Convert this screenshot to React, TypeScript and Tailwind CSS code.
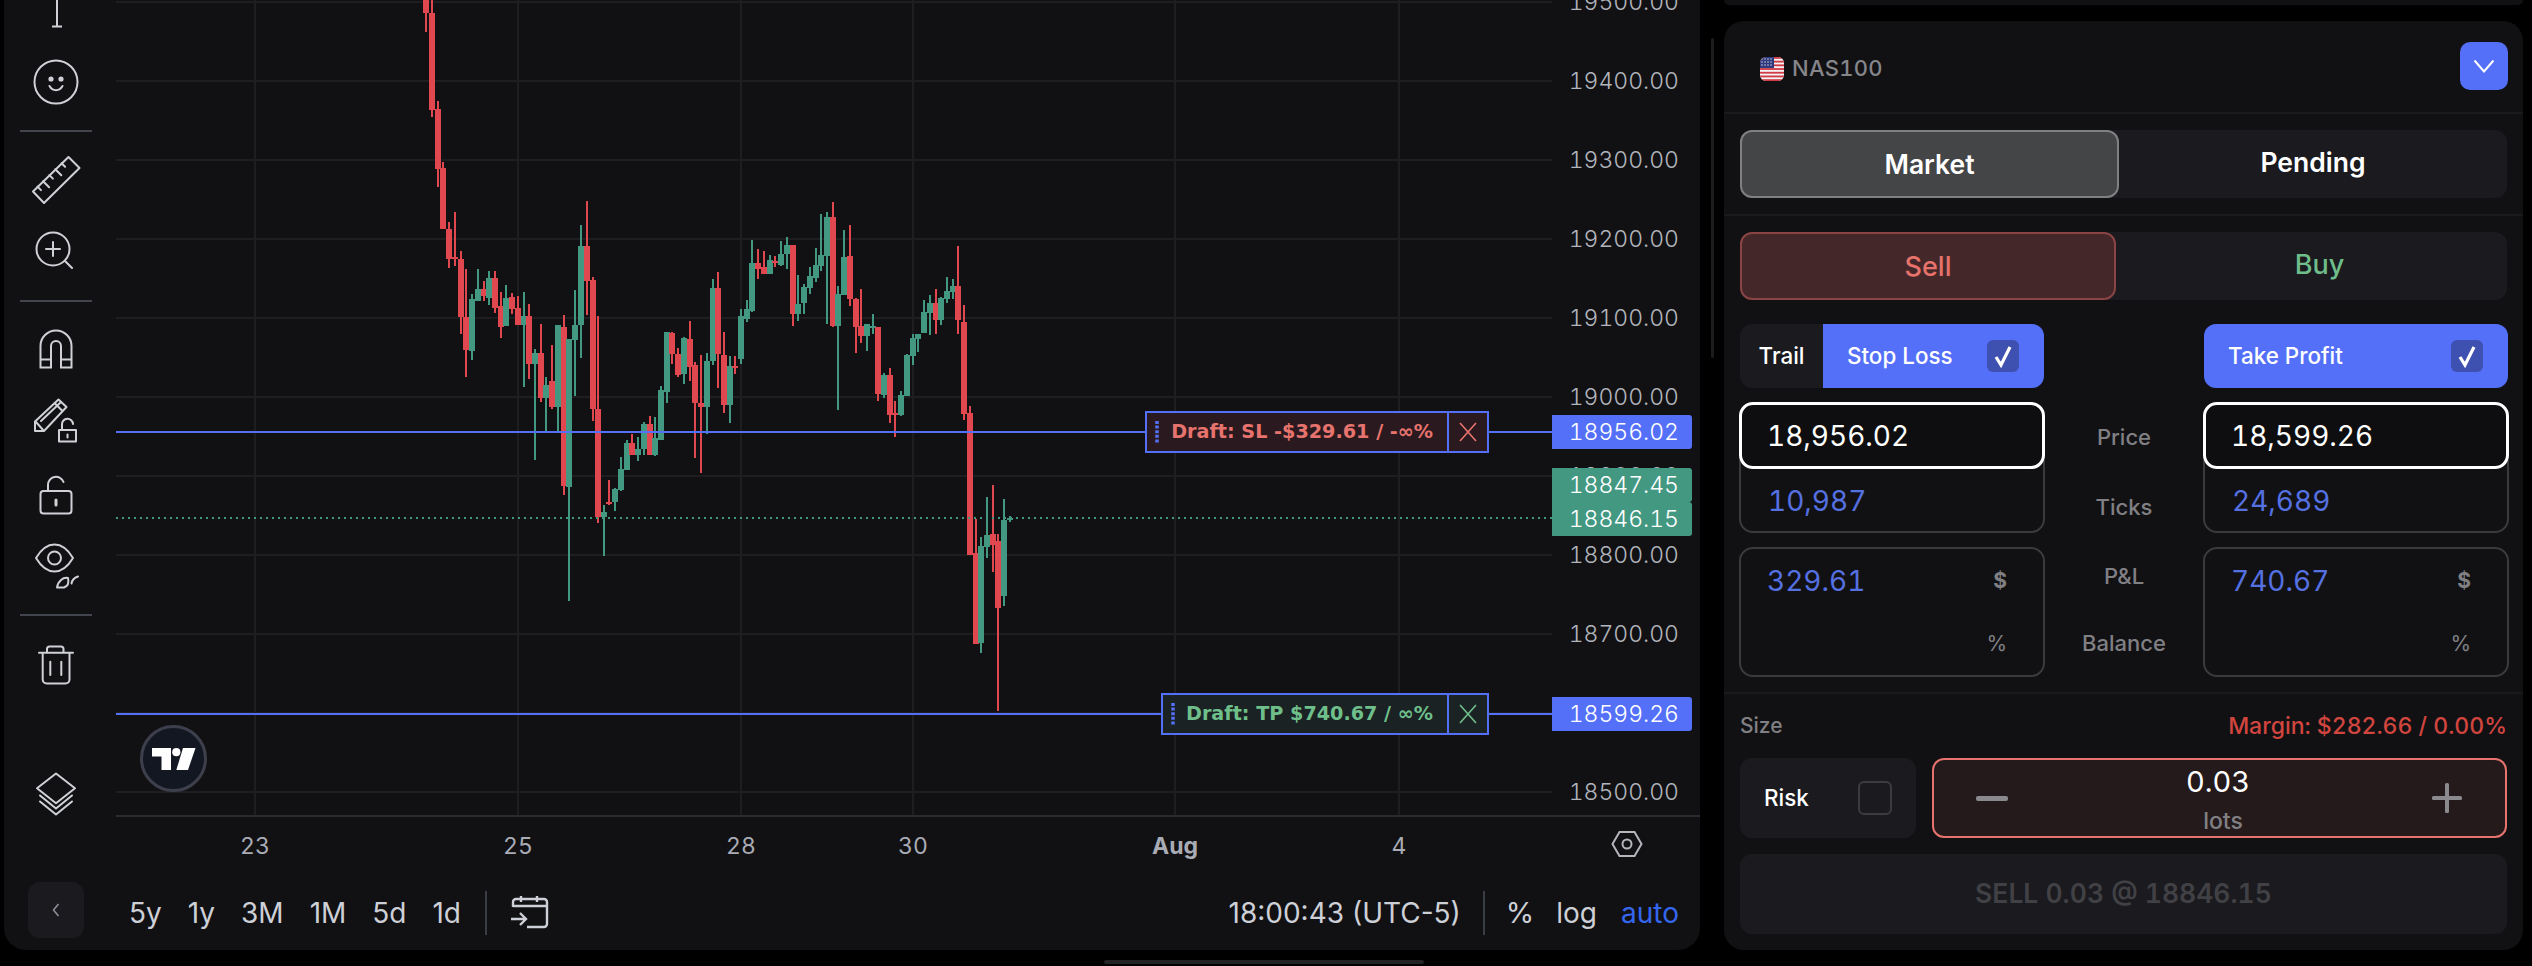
import React from 'react';

type Candle = [number, number, number, number, number, 'r' | 'g'];

// x, wick top, wick bottom, body top, body bottom
const candles: Candle[] = [
  [66, -20, 70, -20, 29, 'r'], [81, -20, 254, 28, 239, 'r'], [96, 219, 407, 237, 367, 'r'], [109, 353, 498, 366, 498, 'r'],
  [124, 484, 584, 499, 563, 'r'], [139, 462, 579, 560, 564, 'r'], [154, 547, 727, 563, 690, 'r'], [167, 586, 821, 690, 762, 'r'],
  [182, 639, 784, 651, 764, 'g'], [197, 586, 656, 629, 656, 'g'], [212, 612, 656, 629, 645, 'r'], [226, 590, 664, 605, 649, 'g'],
  [240, 590, 682, 605, 670, 'r'], [255, 636, 736, 666, 711, 'r'], [269, 621, 710, 649, 710, 'g'], [283, 638, 684, 647, 673, 'r'],
  [298, 645, 708, 671, 708, 'r'], [313, 636, 843, 688, 708, 'g'], [327, 662, 825, 688, 791, 'r'], [341, 760, 1002, 769, 793, 'g'],
  [356, 706, 875, 769, 867, 'r'], [370, 820, 940, 837, 865, 'g'], [384, 751, 891, 828, 886, 'r'], [399, 707, 940, 707, 886, 'g'],
  [414, 686, 1078, 712, 1058, 'r'], [428, 738, 1307, 738, 1060, 'g'], [442, 632, 862, 707, 740, 'g'], [457, 490, 780, 536, 708, 'g'],
  [472, 438, 686, 536, 612, 'r'], [487, 603, 917, 610, 889, 'r'], [500, 688, 1139, 889, 1126, 'r'], [515, 1098, 1209, 1115, 1124, 'g'],
  [529, 1045, 1098, 1092, 1096, 'r'], [543, 1061, 1111, 1063, 1093, 'g'], [558, 995, 1069, 1021, 1067, 'g'], [574, 958, 1023, 964, 1023, 'g'],
  [587, 945, 990, 963, 990, 'r'], [601, 950, 1004, 978, 989, 'g'], [617, 919, 991, 923, 978, 'g'], [631, 905, 991, 923, 991, 'r'],
  [645, 908, 993, 953, 991, 'g'], [660, 841, 957, 849, 957, 'g'], [675, 723, 878, 723, 852, 'g'], [689, 723, 793, 725, 771, 'r'],
  [703, 758, 821, 771, 816, 'r'], [718, 734, 836, 736, 814, 'g'], [733, 699, 828, 738, 798, 'r'], [747, 788, 997, 795, 878, 'r'],
  [761, 772, 1030, 876, 886, 'r'], [776, 769, 944, 786, 886, 'g'], [791, 608, 795, 627, 786, 'g'], [805, 592, 845, 627, 771, 'r'],
  [820, 723, 899, 773, 882, 'r'], [834, 775, 921, 797, 882, 'g'], [848, 775, 814, 797, 800, 'r'], [862, 673, 791, 688, 782, 'g'],
  [877, 653, 701, 673, 694, 'g'], [891, 523, 679, 573, 676, 'g'], [905, 542, 608, 573, 585, 'r'], [920, 547, 597, 582, 597, 'r'],
  [935, 554, 597, 566, 597, 'g'], [949, 556, 582, 567, 571, 'r'], [963, 525, 578, 553, 576, 'g'], [978, 516, 586, 534, 553, 'g'],
  [993, 534, 710, 534, 683, 'r'], [1007, 599, 699, 662, 683, 'g'], [1021, 618, 684, 625, 660, 'g'], [1036, 582, 640, 601, 627, 'g'],
  [1051, 539, 614, 577, 605, 'g'], [1065, 466, 590, 555, 579, 'g'], [1079, 461, 706, 473, 558, 'g'], [1095, 440, 712, 473, 710, 'r'],
  [1108, 623, 893, 640, 710, 'g'], [1122, 501, 642, 560, 642, 'g'], [1138, 490, 666, 558, 651, 'r'], [1152, 649, 769, 651, 712, 'r'],
  [1165, 629, 747, 710, 732, 'r'], [1181, 706, 764, 706, 732, 'g'], [1196, 684, 727, 709, 712, 'g'], [1210, 712, 873, 712, 858, 'r'],
  [1224, 812, 866, 817, 860, 'g'], [1239, 801, 921, 817, 902, 'r'], [1252, 873, 951, 898, 902, 'r'], [1267, 850, 906, 860, 904, 'g'],
  [1282, 771, 862, 773, 862, 'g'], [1297, 727, 795, 736, 775, 'g'], [1311, 727, 767, 727, 738, 'g'], [1325, 653, 725, 679, 725, 'g'],
  [1340, 642, 729, 660, 681, 'g'], [1355, 629, 727, 660, 697, 'r'], [1369, 647, 708, 649, 697, 'g'], [1384, 603, 660, 634, 651, 'g'],
  [1398, 608, 651, 623, 636, 'g'], [1412, 536, 727, 623, 697, 'r'], [1426, 664, 915, 701, 901, 'r'], [1441, 884, 1208, 899, 1208, 'r'],
  [1456, 1130, 1402, 1204, 1402, 'r'], [1470, 1169, 1422, 1189, 1400, 'g'], [1484, 1082, 1215, 1165, 1191, 'g'], [1499, 1056, 1245, 1163, 1185, 'r'],
  [1513, 1163, 1548, 1178, 1322, 'r'], [1527, 1085, 1318, 1132, 1296, 'g'], [1542, 1122, 1135, 1128, 1131, 'g'],
];

const sx = (x: number) => 400 + x / 2.529;
const sy = (y: number) => y / 2.176;

const gridY = [2, 81, 160, 239, 318, 397, 476, 555, 634, 713, 792];
const gridX = [255, 518, 741, 913, 1175, 1399];
const ticks = ['19500.00', '19400.00', '19300.00', '19200.00', '19100.00', '19000.00', '18900.00', '18800.00', '18700.00', '18600.00', '18500.00'];
const ranges = ['5y', '1y', '3M', '1M', '5d', '1d'];

const Icon: React.FC<{ y: number; h: number; className?: string; children: React.ReactNode }> = ({ y, h, className, children }) => (
  <svg
    className={className}
    width={56}
    height={h}
    viewBox={`28 ${y} 56 ${h}`}
    fill="none"
    stroke="#cfd1d6"
    strokeWidth={2}
    strokeLinecap="round"
    strokeLinejoin="round"
  >
    {children}
  </svg>
);

const Toolbar = () => (
  <div className="flex flex-col items-center w-[112px] pr-[8px] shrink-0">
    <Icon y={0} h={30}>
      <path d="M57 -2V26.5M52 26.5H62" strokeLinecap="butt" />
    </Icon>
    <Icon y={58} h={48} className="mt-[28px]">
      <circle cx={56} cy={82} r={21.5} />
      <circle cx={51} cy={79} r={1.6} fill="#cfd1d6" />
      <circle cx={61} cy={79} r={1.6} fill="#cfd1d6" />
      <path d="M49.5 86c3 5.5 10 5.5 13 0" />
    </Icon>
    <div className="w-[72px] h-[2px] mt-[24px] bg-[#42454d]" />
    <Icon y={154} h={52} className="mt-[22px]">
      <path d="M33 191.5L68.5 157L79.5 168L44 203Z" />
      <path d="M37.5 186.6l3.5 3.5M43.1 181.2l6 6M49.4 175.1l3.5 3.5M55.3 169.3l6 6M61.6 163.2l3.5 3.5" />
    </Icon>
    <Icon y={230} h={42} className="mt-[24px]">
      <circle cx={53} cy={249} r={16.5} />
      <path d="M53 242v14M46 249h14M65 261l7 7" />
    </Icon>
    <div className="w-[72px] h-[2px] mt-[28px] bg-[#42454d]" />
    <Icon y={328} h={42} className="mt-[26px]">
      <path d="M40.5 367.5V346a15.5 15.5 0 0 1 31 0V367.5H61V346a5 5 0 0 0-10 0V367.5ZM40.5 359.5H51M61 359.5H71.5" strokeLinejoin="miter" />
    </Icon>
    <Icon y={397} h={47} className="mt-[27px]">
      <path d="M35 431V421.5L58.5 399.5L66.5 407L44 431ZM35.5 421.5L44 431M41 421L60.5 402.5M54.5 403L62.5 411" />
      <path d="M59 430H76V441.5H59ZM62 430V424.5a5.5 5.5 0 0 1 11-0.5M67.5 434.5v3" />
    </Icon>
    <Icon y={474} h={42} className="mt-[30px]">
      <path d="M43.5 491H68.5a3 3 0 0 1 3 3V510.5a3 3 0 0 1-3 3H43.5a3 3 0 0 1-3-3V494a3 3 0 0 1 3-3ZM48 491V485a8 8 0 0 1 15.5-3" />
      <path d="M56 500v5" strokeWidth={3} />
    </Icon>
    <Icon y={542} h={48} className="mt-[26px]">
      <path d="M36 558C42 548 48 544.5 54.5 544.5C61 544.5 67 548 73 558C67 568 61 571.5 54.5 571.5C48 571.5 42 568 36 558Z" />
      <circle cx={54.5} cy={558} r={6.5} />
      <path d="M57 587.5C58 581 63 577 68 578C69 582 68 586 64 587.5ZM78 576.5C75 577.5 72 580 71.5 583.5" />
    </Icon>
    <div className="w-[72px] h-[2px] mt-[24px] bg-[#42454d]" />
    <Icon y={644} h={42} className="mt-[28px]">
      <path d="M39 652.7H73M47 652.7V649a2.5 2.5 0 0 1 2.5-2.5H61a2.5 2.5 0 0 1 2.5 2.5V652.7M42.7 652.7V679.5a4 4 0 0 0 4 4H65.5a4 4 0 0 0 4-4V652.7M50.3 661.7V675M61.3 661.7V675" />
    </Icon>
    <Icon y={771} h={46} className="mt-[85px]">
      <path d="M56 773.5L75 788.3L56 803.3L37 788.3ZM40 795.5L56 808.5L72 795.5M40 801.5L56 814.5L72 801.5" />
    </Icon>
    <button className="flex items-center justify-center w-[56px] h-[56px] mt-[65px] rounded-[12px] bg-[#1a1a1f]">
      <svg width="8" height="14" viewBox="0 0 8 14" fill="none" stroke="#8b8e96" strokeWidth="1.6">
        <path d="M6.5 1L1.5 7L6.5 13" />
      </svg>
    </button>
  </div>
);

const Tag: React.FC<{ className: string; bg: string; tone: string; stroke: string; label: string }> = ({
  className,
  bg,
  tone,
  stroke,
  label,
}) => (
  <div className={`absolute flex h-[42px] border-2 border-[#5570f8] ${className} ${bg}`}>
    <svg className="absolute left-[8px] top-[8px]" width="4" height="22" viewBox="0 0 4 22">
      <line x1="2" x2="2" y1="0" y2="22" stroke="#5570f8" strokeWidth="3.5" strokeDasharray="3 1.6" />
    </svg>
    <div className={`flex-1 flex items-center justify-end pr-[14px] text-[19.2px] font-bold whitespace-nowrap [font-family:'DejaVu_Sans',sans-serif] ${tone}`}>
      {label}
    </div>
    <div className="flex items-center justify-center w-[40px] border-l-2 border-[#5570f8]">
      <svg width="20" height="20" viewBox="0 0 20 20" fill="none" stroke={stroke} strokeWidth="1.6">
        <path d="M2 1L18 19M18 1L2 19" />
      </svg>
    </div>
  </div>
);

const ChartPane = () => (
  <div className="relative w-[1436px] h-full overflow-hidden">
    <svg width={1436} height={815} viewBox="116 0 1436 815" shapeRendering="crispEdges">
      {gridY.map((y) => (
        <rect key={y} x={116} y={y - 1} width={1436} height={2} fill="#1e1e21" />
      ))}
      {gridX.map((x) => (
        <rect key={x} x={x - 1} y={0} width={2} height={815} fill="#1e1e21" />
      ))}
      {candles.map(([x, wt, wb, bt, bb, c], i) => {
        const cx = Math.round(sx(x));
        const fill = c === 'r' ? '#e0474f' : '#439882';
        return (
          <g key={i} fill={fill}>
            <rect x={cx - 1} y={sy(wt)} width={2} height={sy(wb) - sy(wt)} />
            <rect x={cx - 3} y={sy(bt)} width={6} height={Math.max(sy(bb) - sy(bt), 2)} />
          </g>
        );
      })}
      <line x1={116} x2={1552} y1={518} y2={518} stroke="#439882" strokeWidth={2} strokeDasharray="2 4" />
      <rect x={116} y={431} width={1436} height={2} fill="#5570f8" />
      <rect x={116} y={713} width={1436} height={2} fill="#5570f8" />
    </svg>

    <Tag
      className="left-[1029px] top-[411px] w-[344px]"
      bg="bg-[#2a1a1f]"
      tone="text-[#e6736d]"
      stroke="#e6736d"
      label="Draft: SL -$329.61 / -∞%"
    />
    <Tag
      className="left-[1045px] top-[693px] w-[328px]"
      bg="bg-[#1a2224]"
      tone="text-[#6fbf8b]"
      stroke="#6fbf8b"
      label="Draft: TP $740.67 / ∞%"
    />

    <div className="absolute left-[24px] top-[725px] flex items-center justify-center w-[67px] h-[67px] rounded-full bg-[#131722] border-[3px] border-[#3d404c]">
      <svg width="44" height="22" viewBox="0 0 44 22" fill="#ffffff">
        <path d="M0 0H19V22H9.5V8.5H0Z" />
        <circle cx="24.3" cy="4.2" r="4.1" />
        <path d="M31 0H43.5L36 22H24.3Z" />
      </svg>
    </div>
  </div>
);

const PriceTag: React.FC<{ top: string; bg: string; children: React.ReactNode }> = ({ top, bg, children }) => (
  <div className={`absolute left-0 flex items-center justify-end w-[140px] h-[34px] pr-[13px] rounded-r-[3px] text-[23px] font-light text-white ${top} ${bg}`}>
    {children}
  </div>
);

const PriceAxis = () => (
  <div className="relative w-[148px] h-full overflow-hidden">
    <div className="flex flex-col -mt-[37px] text-[23px] font-light text-[#b2b5bc] pr-[21px]">
      {ticks.map((t) => (
        <div key={t} className="flex items-center justify-end h-[79px] shrink-0">
          {t}
        </div>
      ))}
    </div>
    <PriceTag top="top-[415px]" bg="bg-[#5570f8]">18956.02</PriceTag>
    <PriceTag top="top-[468px]" bg="bg-[#439882]">18847.45</PriceTag>
    <PriceTag top="top-[502px]" bg="bg-[#439882]">18846.15</PriceTag>
    <PriceTag top="top-[697px]" bg="bg-[#5570f8]">18599.26</PriceTag>
  </div>
);

const TimeAxis = () => (
  <div className="relative h-[65px] shrink-0 text-[23px] text-[#a9acb4]">
    <span className="absolute left-[139px] top-[12px] -translate-x-1/2">23</span>
    <span className="absolute left-[402px] top-[12px] -translate-x-1/2">25</span>
    <span className="absolute left-[625px] top-[12px] -translate-x-1/2">28</span>
    <span className="absolute left-[797px] top-[12px] -translate-x-1/2">30</span>
    <span className="absolute left-[1059px] top-[12px] -translate-x-1/2 font-bold">Aug</span>
    <span className="absolute left-[1283px] top-[12px] -translate-x-1/2">4</span>
    <svg className="absolute left-[1495px] top-[13px]" width="32" height="28" viewBox="0 0 32 28" fill="none" stroke="#b4b6bc" strokeWidth="2">
      <path d="M8.5 2H23.5L30.5 14L23.5 26H8.5L1.5 14Z" />
      <circle cx="16" cy="14" r="4.5" />
    </svg>
  </div>
);

const BottomBar = () => (
  <div className="flex items-center justify-between h-[68px] pb-[6px] pr-[21px] text-[28px] normal-nums text-[#cdd0d6]">
    <div className="flex items-center">
      <div className="flex gap-[26px] pl-[13px]">
        {ranges.map((r) => (
          <span key={r}>{r}</span>
        ))}
      </div>
      <div className="w-[2px] h-[44px] ml-[24px] bg-[#3a3d46]" />
      <svg className="ml-[22px]" width="40" height="36" viewBox="0 0 40 36" fill="none" stroke="#cdd0d6" strokeWidth="2.4">
        <path d="M4 12V7a3 3 0 0 1 3-3H35a3 3 0 0 1 3 3V29a3 3 0 0 1-3 3H18M4 11H38M12 1V7M28 1V7" />
        <path d="M2 24H17M11 18L17 24L11 30" />
      </svg>
    </div>
    <div className="flex items-center">
      <span>18:00:43 (UTC-5)</span>
      <div className="w-[2px] h-[44px] ml-[22px] mr-[21px] bg-[#3a3d46]" />
      <span className="text-[29px]">%</span>
      <span className="ml-[22px]">log</span>
      <span className="ml-[24px] text-[#3566ee]">auto</span>
    </div>
  </div>
);

const Flag = () => (
  <svg width="24" height="24" viewBox="0 0 24 24">
    <defs>
      <clipPath id="flag-clip">
        <rect width="24" height="24" rx="6" />
      </clipPath>
    </defs>
    <g clipPath="url(#flag-clip)">
      <rect width="24" height="24" fill="#f4f4f4" />
      {[0, 3.7, 7.4, 11.1, 14.8, 18.5, 22.2].map((y) => (
        <rect key={y} y={y} width="24" height="1.85" fill="#d23b46" />
      ))}
      <rect width="14" height="11" fill="#2f3a7e" />
      {[2, 5, 8].map((y) =>
        [2, 5, 8, 11].map((x) => <circle key={`${x}-${y}`} cx={x} cy={y} r="0.7" fill="#dfe3f5" />),
      )}
    </g>
  </svg>
);

const Check: React.FC<{ label: string; className?: string }> = ({ label, className }) => (
  <div className={`flex items-center justify-between h-[64px] pl-[24px] pr-[25px] bg-[#5570f8] text-[22.4px] font-medium text-white ${className}`}>
    {label}
    <span className="flex items-center justify-center w-[32px] h-[32px] rounded-[6px] bg-[#3f51b0]">
      <svg width="20" height="24" viewBox="0 0 20 24" fill="none" stroke="#ffffff" strokeWidth="3.2">
        <path d="M3 13L8 21L17 3" />
      </svg>
    </span>
  </div>
);

const PriceColumn: React.FC<{ price: string; ticks: string; pnl: string }> = ({ price, ticks: tickCount, pnl }) => (
  <div className="-mx-px mt-[14px]">
    <div className="relative z-10 flex items-center h-[67px] px-[25px] rounded-[14px] border-[3px] border-white bg-[#0e0e10] text-[28px] text-white">
      {price}
    </div>
    <div className="flex items-center h-[73px] -mt-[9px] pt-[9px] px-[27px] rounded-b-[14px] border-2 border-[#3a3a3d] text-[28px] text-[#5570e0]">
      {tickCount}
    </div>
    <div className="h-[130px] mt-[14px] rounded-[14px] border-2 border-[#3a3a3d]">
      <div className="flex items-center justify-between h-[63px] pl-[26px] pr-[36px]">
        <span className="text-[28px] text-[#5570e0]">{pnl}</span>
        <span className="text-[21px] font-bold text-[#808084]">$</span>
      </div>
      <div className="flex items-center justify-end h-[63px] pr-[36px] text-[21px] text-[#808084]">%</div>
    </div>
  </div>
);

const OrderPanel = () => (
  <div className="flex flex-col w-[799px] h-[929px] rounded-[20px] bg-[#111114] text-white">
    <div className="flex items-center justify-between h-[93px] shrink-0 pl-[36px] pr-[15px] border-b-2 border-[#1a1a1d]">
      <div className="flex items-center gap-[8px] mt-[4px]">
        <Flag />
        <span className="text-[22px] font-medium tracking-[0.3px] text-[#85858a]">NAS100</span>
      </div>
      <button className="flex items-center justify-center w-[48px] h-[48px] -mt-[2px] rounded-[10px] bg-[#5570f8]">
        <svg width="22" height="14" viewBox="0 0 22 14" fill="none" stroke="#ffffff" strokeWidth="2">
          <path d="M1.5 1.5L11 12.5L20.5 1.5" />
        </svg>
      </button>
    </div>

    <div className="h-[102px] shrink-0 px-[16px] pt-[16px] border-b-2 border-[#1a1a1d]">
      <div className="flex h-[68px] rounded-[12px] bg-[#1a1a1f] text-[26.5px] font-semibold">
        <div className="flex items-center justify-center w-[379px] pt-[2px] rounded-[12px] border-2 border-[#808080] bg-[#444547]">Market</div>
        <div className="flex-1 flex items-center justify-center pb-[2px]">Pending</div>
      </div>
    </div>

    <div className="shrink-0 px-[16px] pt-[16px] pb-[15px] border-b-2 border-[#1a1a1d]">
      <div className="flex h-[68px] rounded-[12px] bg-[#1a1a1f] text-[27px] font-medium">
        <div className="flex items-center justify-center w-[376px] pt-[2px] rounded-[12px] border-2 border-[#8a4443] bg-[#432729] text-[#e6726b]">Sell</div>
        <div className="flex-1 flex items-center justify-center pb-[2px] pl-[16px] text-[#6fbd8a]">Buy</div>
      </div>
      <div className="grid grid-cols-[304px_160px_304px] mt-[24px]">
        <div>
          <div className="flex">
            <div className="flex items-center justify-center w-[83px] h-[64px] rounded-l-[12px] bg-[#1a1a1f] text-[22.4px] font-medium">Trail</div>
            <Check label="Stop Loss" className="flex-1 rounded-r-[12px]" />
          </div>
          <PriceColumn price="18,956.02" ticks="10,987" pnl="329.61" />
        </div>
        <div className="flex flex-col items-center pt-[78px] text-[22px] font-medium text-[#808084]">
          <div className="flex items-center h-[71px]">Price</div>
          <div className="flex items-center h-[68px]">Ticks</div>
          <div className="flex items-center h-[70px]">P&amp;L</div>
          <div className="flex items-center h-[64px]">Balance</div>
        </div>
        <div>
          <Check label="Take Profit" className="rounded-[12px]" />
          <PriceColumn price="18,599.26" ticks="24,689" pnl="740.67" />
        </div>
      </div>
    </div>

    <div className="px-[16px]">
      <div className="flex items-center justify-between h-[64px] text-[21px] font-medium">
        <span className="text-[#808084]">Size</span>
        <span className="text-[23px] text-[#d1453f]">Margin: $282.66 / 0.00%</span>
      </div>
      <div className="flex gap-[16px] h-[80px]">
        <div className="flex items-center justify-between w-[176px] pl-[24px] pr-[24px] rounded-[12px] bg-[#1a1a1f] text-[22.4px] font-medium">
          Risk
          <span className="w-[34px] h-[34px] rounded-[6px] border-2 border-[#3c3c40]" />
        </div>
        <div className="flex-1 flex items-center justify-between pl-[42px] pr-[43px] rounded-[12px] border-2 border-[#e6736d] bg-[#241a1b]">
          <span className="w-[32px] h-[5px] rounded-[2px] bg-[#8a8a8e]" />
          <div className="flex flex-col items-center ml-[6px] mt-[2px]">
            <span className="-ml-[10px] text-[29px] leading-[34px]">0.03</span>
            <span className="mt-[9px] text-[23px] leading-[26px] font-medium text-[#808084]">lots</span>
          </div>
          <svg width="30" height="30" viewBox="0 0 30 30" fill="#8a8a8e">
            <rect x="0" y="13" width="30" height="4" rx="1.5" />
            <rect x="13" y="0" width="4" height="30" rx="1.5" />
          </svg>
        </div>
      </div>
      <button className="flex items-center justify-center w-full h-[80px] mt-[16px] rounded-[12px] bg-[#1a1a1f] text-[26.5px] font-semibold text-[#414145]">
        SELL 0.03 @ 18846.15
      </button>
    </div>
  </div>
);

export default function App() {
  return (
    <div className="relative flex w-[2532px] h-[966px] pl-[4px] bg-black overflow-hidden tabular-nums [font-family:Inter,sans-serif]">
      <div className="flex w-[1696px] h-[950px] rounded-b-[22px] bg-[#111114] shrink-0">
        <Toolbar />
        <div className="flex flex-col flex-1 min-w-0">
          <div className="flex h-[817px] shrink-0 border-b-2 border-[#2a2a2f]">
            <ChartPane />
            <PriceAxis />
          </div>
          <TimeAxis />
          <BottomBar />
        </div>
      </div>

      <div className="w-[24px] shrink-0">
        <div className="w-[3px] h-[320px] mt-[38px] ml-[11px] rounded-full bg-[#1c1c1f]" />
      </div>

      <div className="w-[799px] shrink-0">
        <div className="h-[5px] rounded-b-[20px] bg-[#111114]" />
        <div className="mt-[16px]">
          <OrderPanel />
        </div>
      </div>

      <div className="absolute left-[1104px] top-[960px] w-[320px] h-[4px] rounded-full bg-[#232326]" />
    </div>
  );
}
